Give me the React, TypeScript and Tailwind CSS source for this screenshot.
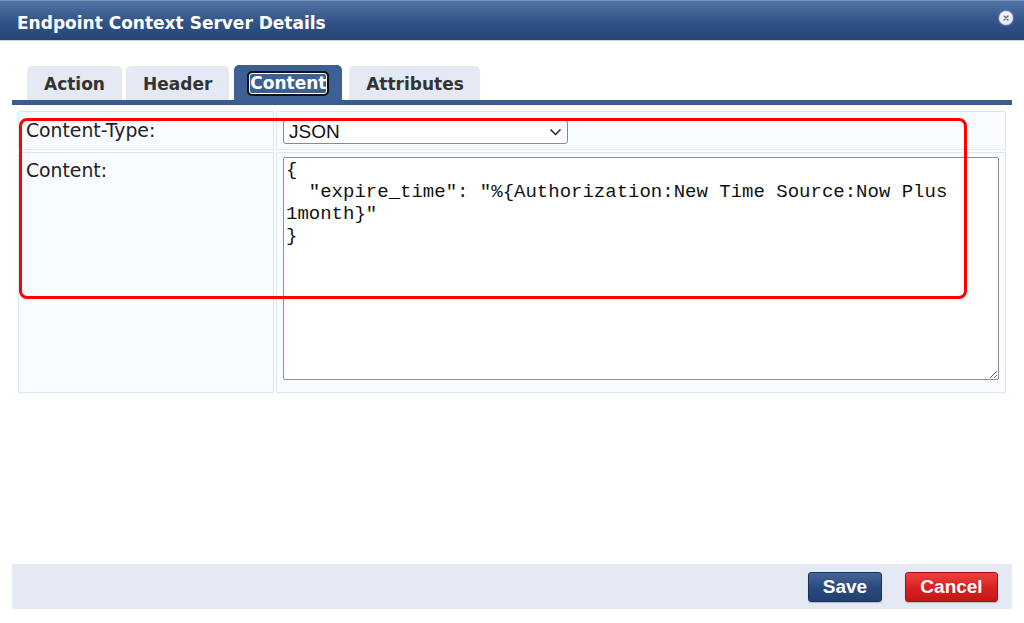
import React from 'react';

const verdana = "font-['DejaVu_Sans',Verdana,sans-serif]";
const arial = "font-['Liberation_Sans',Arial,sans-serif]";

const tabs = ['Action', 'Header', 'Content', 'Attributes'];

const content = `{
  "expire_time": "%{Authorization:New Time Source:Now Plus 1month}"
}`;

function CloseIcon() {
  return (
    <div className="flex h-[14px] w-[14px] items-center justify-center rounded-full bg-[radial-gradient(circle_at_40%_35%,#ffffff,#d8dde6)] shadow-[0_0_2px_rgba(255,255,255,0.8)]">
      <svg width="6" height="6" viewBox="0 0 6 6">
        <path d="M1 1L5 5M5 1L1 5" stroke="#5a6478" strokeWidth="1.4" strokeLinecap="round" />
      </svg>
    </div>
  );
}

export default function App() {
  return (
    <div className={`relative flex h-[623px] w-[1024px] flex-col overflow-hidden bg-white ${verdana}`}>
      {/* title bar */}
      <div className="flex h-[41px] items-center justify-between border-t border-[#7d95bb] border-b border-b-[#c9d2df] bg-gradient-to-b from-[#5273a3] via-[#34558a] to-[#244474] pl-[17px] pr-[11px]">
        <h1 className="pt-[6px] text-[17px] font-bold text-white">Endpoint Context Server Details</h1>
        <div className="-mt-[6px]">
          <CloseIcon />
        </div>
      </div>

      {/* tabs */}
      <div className="mx-[12px] mt-[24px] flex items-end gap-[4px] border-b-[5px] border-[#3b5c8f] pl-[15px]">
        {tabs.map((t) =>
          t === 'Content' ? (
            <div
              key={t}
              className="ml-[1px] mr-[1px] flex h-[35px] items-center rounded-t-[5px] bg-[#3d5f94] px-[13px] pt-[2px] text-[17px] font-bold text-white"
            >
              <span className="rounded-[5px] border-2 border-[#111] px-[1px] leading-[21px] shadow-[inset_0_0_0_1px_#fff]">
                {t}
              </span>
            </div>
          ) : (
            <div
              key={t}
              className="flex h-[34px] w-auto items-center rounded-t-[5px] bg-[#e4e9f3] px-[17px] pt-[3px] text-[17px] font-bold text-[#333] last:ml-[2px] last:w-[131px] last:justify-center"
            >
              {t}
            </div>
          )
        )}
      </div>

      {/* form table */}
      <div className="mx-[18px] mt-[6px] grid w-[988px] grid-cols-[256px_1fr] gap-[2px]">
        <div className="flex h-[39px] items-center border border-[#dde5f1] bg-[#f8fbff] pl-[7px] pt-[1px] text-[18.8px] text-[#222]">
          Content-Type:
        </div>
        <div className="flex h-[39px] items-start border border-[#dde5f1] bg-[#f8fbff] pl-[6px] pt-[8px]">
          <div className={`flex h-[24px] w-[285px] items-center justify-between rounded-[3px] border border-[#8a8a8a] bg-white pl-[5px] pr-[5px] text-[19px] text-[#111] ${arial}`}>
            <span>JSON</span>
            <svg width="13" height="8" viewBox="0 0 13 8">
              <path d="M1.5 1.5L6.5 6.5L11.5 1.5" fill="none" stroke="#222" strokeWidth="1.5" />
            </svg>
          </div>
        </div>
        <div className="h-[241px] border border-[#dde5f1] bg-[#f8fbff] pl-[7px] pt-[7px] text-[18.8px] leading-[22px] text-[#222]">
          Content:
        </div>
        <div className="h-[241px] border border-[#dde5f1] bg-[#f8fbff] pl-[6px] pt-[4px]">
          <textarea
            readOnly
            value={content}
            className="block h-[223px] w-[716px] resize rounded-[2px] border border-[#8f8f8f] bg-white px-[2px] pt-[1px] font-['Liberation_Mono','Courier_New',monospace] text-[19px] leading-[22px] text-[#111] outline-none"
          />
        </div>
      </div>

      {/* annotation box */}
      <div className="pointer-events-none absolute left-[19px] top-[118px] h-[181px] w-[948px] rounded-[8px] border-[3px] border-[#ff0000]" />

      {/* footer */}
      <div className="mx-[12px] mb-[14px] mt-auto flex h-[45px] items-start justify-end gap-[23px] bg-[#e4e9f4] pr-[14px] pt-[8px]">
        <button
          className={`h-[30px] w-[74px] rounded-[3px] border border-[#1b335c] bg-gradient-to-b from-[#45669a] via-[#2b4b7e] to-[#20406f] text-[19px] font-bold text-white shadow-[0_1px_1px_rgba(0,0,0,0.2)] ${arial}`}
        >
          Save
        </button>
        <button
          className={`h-[30px] w-[93px] rounded-[3px] border border-[#a11212] bg-gradient-to-b from-[#ee3f3f] via-[#d82222] to-[#c41616] text-[19px] font-bold text-white shadow-[0_1px_1px_rgba(0,0,0,0.2)] ${arial}`}
        >
          Cancel
        </button>
      </div>
    </div>
  );
}
